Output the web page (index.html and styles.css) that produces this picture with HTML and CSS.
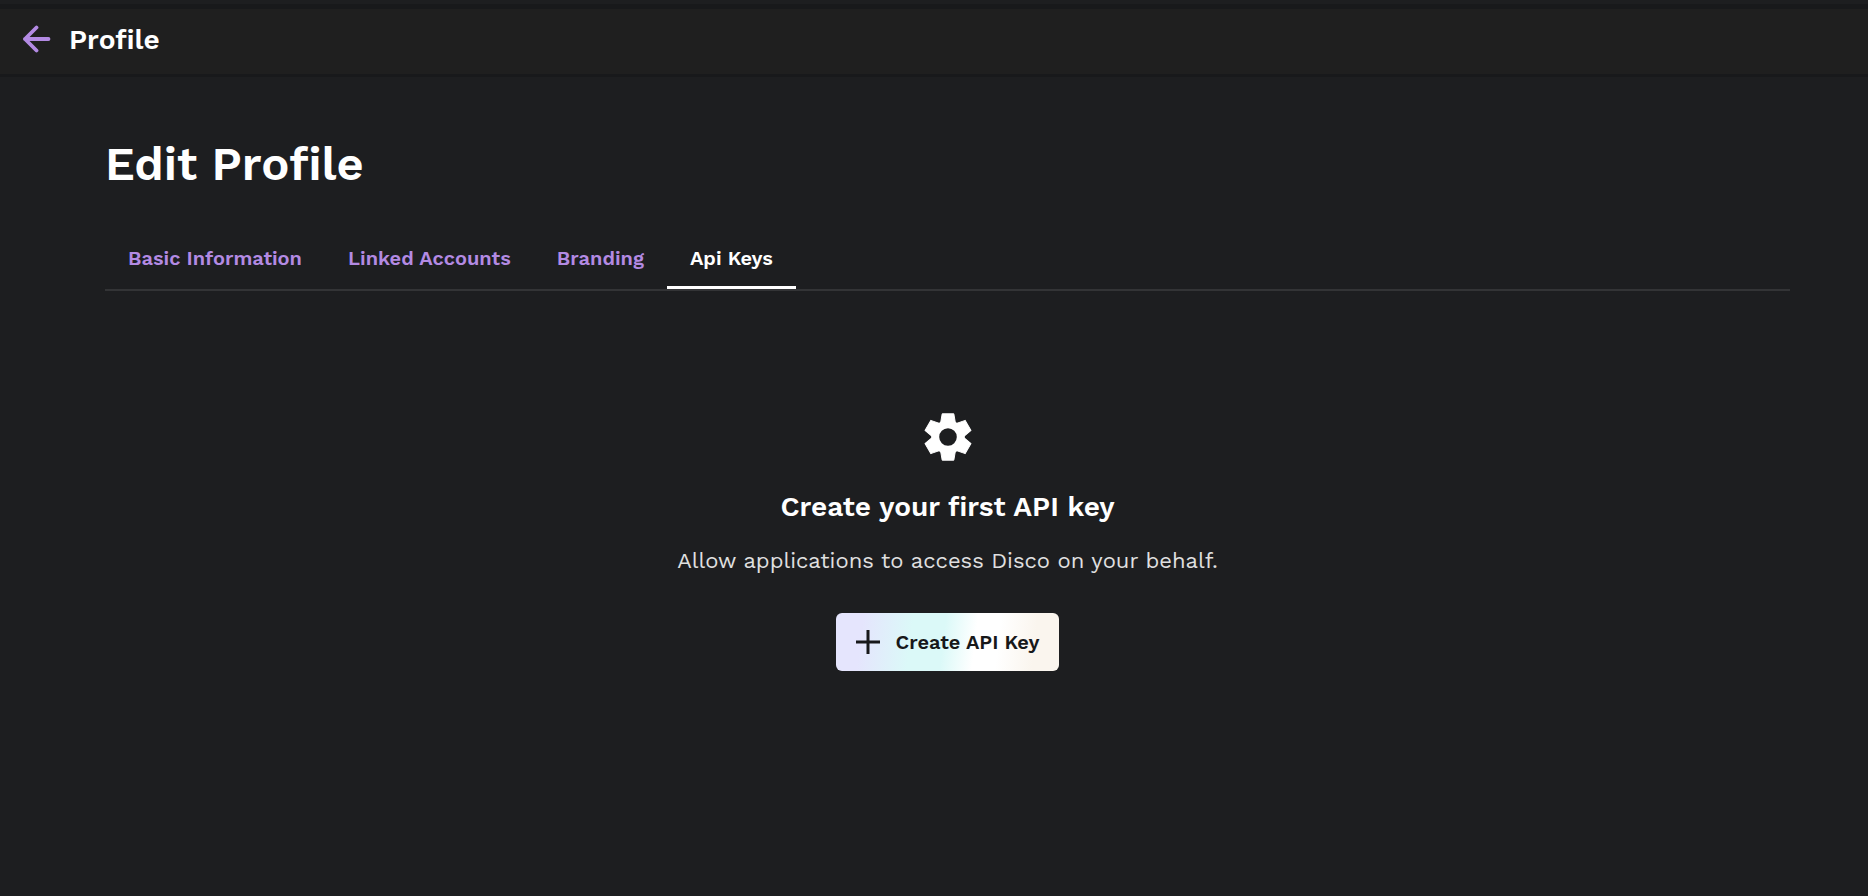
FILE: index.html
```
<!DOCTYPE html>
<html lang="en">

<head>
    <meta charset="UTF-8">
    <meta name="viewport" content="width=device-width, initial-scale=1.0">
    <title>Edit Profile</title>
    <link rel="stylesheet" href="styles.css">
</head>

<body>
    <header class="topbar">
        <a href="#" class="back" aria-label="Back">
            <svg width="28" height="28" viewBox="0 0 28 28" fill="none" stroke="currentColor" stroke-width="3.8" stroke-linecap="round" stroke-linejoin="round">
                <path d="M13.5 2.5L2 14L13.5 25.5M2 14H25.5" />
            </svg>
        </a>
        <span class="topbar-title">Profile</span>
    </header>

    <main class="container">
        <h1>Edit Profile</h1>
        <nav class="tabs">
            <a href="#" class="tab">Basic Information</a>
            <a href="#" class="tab">Linked Accounts</a>
            <a href="#" class="tab">Branding</a>
            <a href="#" class="tab active">Api Keys</a>
        </nav>

        <section class="empty">
            <svg class="gear" viewBox="-28 -28 56 56" fill="currentColor" stroke="currentColor" stroke-linejoin="round">
                <circle r="12.8" fill="none" stroke-width="8" />
                <path id="tooth" d="M-5.8 -23.2H5.8L7.4 -14H-7.4Z" />
                <use href="#tooth" transform="rotate(60)" />
                <use href="#tooth" transform="rotate(120)" />
                <use href="#tooth" transform="rotate(180)" />
                <use href="#tooth" transform="rotate(240)" />
                <use href="#tooth" transform="rotate(300)" />
            </svg>
            <h2>Create your first API key</h2>
            <p>Allow applications to access Disco on your behalf.</p>
            <button type="button" class="create">
                <svg width="24" height="24" viewBox="0 0 24 24" fill="none" stroke="currentColor" stroke-width="3">
                    <path d="M12 0V24M0 12H24" />
                </svg>
                Create API Key
            </button>
        </section>
    </main>
</body>

</html>
```
FILE: styles.css
```
body {
    display: flow-root;
    margin: 0;
    background-color: #1d1e20;
    color: #fff;
    font-family: 'Work Sans', 'Inter', sans-serif;
}

.topbar {
    display: flex;
    align-items: center;
    gap: 18px;
    height: 60px;
    margin-top: 4px;
    padding: 0 23px 5px;
    border-top: 5px solid #18191b;
    border-bottom: 3px solid #18191b;
    background-color: #1f1f1f;
}

.back {
    display: flex;
    color: #b38ae3;
}

.topbar-title {
    font-size: 28px;
    font-weight: 600;
}

.container {
    padding: 57px 78px 0 105px;
}

h1 {
    margin: 0;
    font-size: 47px;
    line-height: 60px;
    font-weight: 600;
}

.tabs {
    display: flex;
    margin-top: 32px;
    border-bottom: 2px solid #333436;
}

.tab {
    padding: 20px 23px 16px;
    border-bottom: 3px solid transparent;
    color: #b38ae3;
    font-size: 20px;
    line-height: 24px;
    font-weight: 600;
    text-decoration: none;
}

.tab.active {
    border-color: #fff;
    color: #fff;
}

.empty {
    display: flex;
    flex-direction: column;
    align-items: center;
    padding-top: 118px;
}

.gear {
    width: 56px;
    height: 56px;
}

h2 {
    margin: 24px 0 0;
    font-size: 28px;
    line-height: 36px;
    font-weight: 600;
}

p {
    margin: 20px 0 0;
    color: #e0e0e0;
    font-size: 22px;
    line-height: 32px;
}

.create {
    display: flex;
    align-items: center;
    gap: 16px;
    height: 58px;
    margin-top: 36px;
    padding: 0 20px;
    border: none;
    border-radius: 6px;
    background: linear-gradient(97deg, #e5e5fd 12%, #dbf9f8 34%, #dbf9f8 48%, #fff 62%, #fff 72%, #faf5ee 88%);
    color: #17181a;
    font-family: inherit;
    font-size: 20px;
    font-weight: 600;
    cursor: pointer;
}
```
